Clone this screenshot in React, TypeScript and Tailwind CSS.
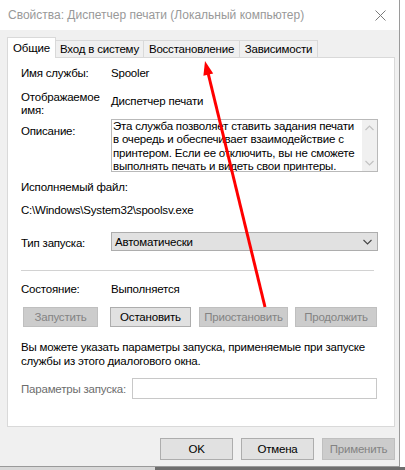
import React from "react";

function Btn({ label, disabled, className }: { label: string; disabled?: boolean; className: string }) {
  return (
    <div
      className={
        "flex items-center justify-center border whitespace-nowrap " +
        (disabled ? "border-[#bfbfbf] bg-[#cccccc] text-[#838383] " : "border-[#adadad] bg-[#e1e1e1] text-black ") +
        className
      }
    >
      {label}
    </div>
  );
}

export default function App() {
  return (
    <div className="relative flex h-[470px] w-[405px] flex-col bg-white font-['Liberation_Sans',Arial,sans-serif] text-[11.5px] leading-[14px] tracking-[-0.2px] text-black">
      <div className="flex h-[467px] w-[400px] flex-col border-r border-b border-[#9a9a9a] bg-[#f0f0f0]">
        {/* title bar */}
        <div className="flex h-[30px] shrink-0 items-center justify-between bg-white pl-[8px] pr-[12px]">
          <span className="text-[12px] tracking-normal text-[#999999]">Свойства: Диспетчер печати (Локальный компьютер)</span>
          <svg width="11" height="11" viewBox="0 0 11 11" className="mr-[1px]">
            <path d="M0.5 0.5 L10.5 10.5 M10.5 0.5 L0.5 10.5" stroke="#7a7a7a" strokeWidth="1" />
          </svg>
        </div>

        {/* tabs */}
        <div className="mt-[7px] flex h-[20px] items-end pl-[7px]">
          <div className="relative z-10 -mb-[1px] flex h-[21px] w-[49px] items-start justify-center border border-b-0 border-[#d9d9d9] bg-white pt-[3px]">
            Общие
          </div>
          <div className="flex h-[17px] w-[88px] items-center justify-center border border-l-0 border-b-0 border-[#d9d9d9] bg-[#f0f0f0]">
            Вход в систему
          </div>
          <div className="flex h-[17px] w-[96px] items-center justify-center border border-l-0 border-b-0 border-[#d9d9d9] bg-[#f0f0f0]">
            Восстановление
          </div>
          <div className="flex h-[17px] w-[78px] items-center justify-center border border-l-0 border-b-0 border-[#d9d9d9] bg-[#f0f0f0]">
            Зависимости
          </div>
        </div>

        {/* panel */}
        <div className="ml-[7px] flex h-[370px] w-[388px] flex-col border border-[#d9d9d9] bg-white pl-[13px]">
          <div className="mt-[8px] flex h-[14px]">
            <span className="w-[90px]">Имя службы:</span>
            <span>Spooler</span>
          </div>

          <div className="mt-[11px] flex h-[28px]">
            <div className="w-[90px] leading-[13px]">
              Отображаемое
              <br />
              имя:
            </div>
            <span className="mt-[3px]">Диспетчер печати</span>
          </div>

          <div className="flex h-[53px]">
            <span className="w-[90px] pt-[5px]">Описание:</span>
            <div className="flex w-[267px] border border-[#b9b9b9] bg-white">
              <div className="flex-1 overflow-hidden whitespace-nowrap pl-[1px] leading-[13.4px]">
                Эта служба позволяет ставить задания печати
                <br />
                в очередь и обеспечивает взаимодействие с
                <br />
                принтером. Если ее отключить, вы не сможете
                <br />
                выполнять печать и видеть свои принтеры.
              </div>
              <div className="flex w-[15px] flex-col items-center justify-between bg-[#f0f0f0] py-[5px]">
                <svg width="9" height="6" viewBox="0 0 9 6">
                  <path d="M0.5 5 L4.5 1 L8.5 5" stroke="#c2c2c2" strokeWidth="1.2" fill="none" />
                </svg>
                <svg width="9" height="6" viewBox="0 0 9 6">
                  <path d="M0.5 1 L4.5 5 L8.5 1" stroke="#c2c2c2" strokeWidth="1.2" fill="none" />
                </svg>
              </div>
            </div>
          </div>

          <div className="mt-[8px] h-[14px]">Исполняемый файл:</div>
          <div className="mt-[9px] h-[14px]">C:\Windows\System32\spoolsv.exe</div>

          <div className="mt-[15px] flex h-[19px] items-center">
            <span className="w-[90px] pt-[2px]">Тип запуска:</span>
            <div className="flex h-[19px] w-[267px] items-center justify-between border border-[#adadad] bg-[#e1e1e1] pl-[3px] pr-[5px]">
              <span>Автоматически</span>
              <svg width="9" height="6" viewBox="0 0 9 6">
                <path d="M0.5 1 L4.5 5 L8.5 1" stroke="#444" strokeWidth="1.1" fill="none" />
              </svg>
            </div>
          </div>

          <div className="mt-[19px] h-px w-[353px] bg-[#d2d2d2]" />

          <div className="mt-[11px] flex h-[14px]">
            <span className="w-[90px]">Состояние:</span>
            <span>Выполняется</span>
          </div>

          <div className="mt-[11px] flex h-[20px]">
            <Btn label="Запустить" disabled className="ml-[2px] w-[75px]" />
            <Btn label="Остановить" className="ml-[12px] w-[81px]" />
            <Btn label="Приостановить" disabled className="ml-[8px] w-[89px]" />
            <Btn label="Продолжить" disabled className="ml-[7px] w-[82px]" />
          </div>

          <div className="mt-[13px] h-[28px] whitespace-nowrap">
            Вы можете указать параметры запуска, применяемые при запуске
            <br />
            службы из этого диалогового окна.
          </div>

          <div className="mt-[10px] flex h-[21px] items-center">
            <span className="w-[111px] whitespace-nowrap text-[#6d6d6d]">Параметры запуска:</span>
            <div className="h-[21px] w-[245px] border border-[#c8c8c8] bg-white" />
          </div>
        </div>

        {/* bottom buttons */}
        <div className="mt-[11px] flex justify-end gap-[8px] pr-[4px]">
          <Btn label="OK" className="h-[22px] w-[73px]" />
          <Btn label="Отмена" className="h-[22px] w-[73px]" />
          <Btn label="Применить" disabled className="h-[22px] w-[73px]" />
        </div>
      </div>

      <div className="flex h-[3px]">
        <div className="w-[155px] bg-[#d8d8d8]" />
        <div className="flex-1 bg-[#6e6e6e]" />
      </div>

      {/* red annotation arrow */}
      <svg className="pointer-events-none absolute left-0 top-0" width="405" height="470" viewBox="0 0 405 470">
        <line x1="265" y1="307" x2="208.3" y2="74" stroke="#ff0000" strokeWidth="3" />
        <polygon points="205,61 213.2,73.4 203.4,75.8" fill="#ff0000" />
      </svg>
    </div>
  );
}
